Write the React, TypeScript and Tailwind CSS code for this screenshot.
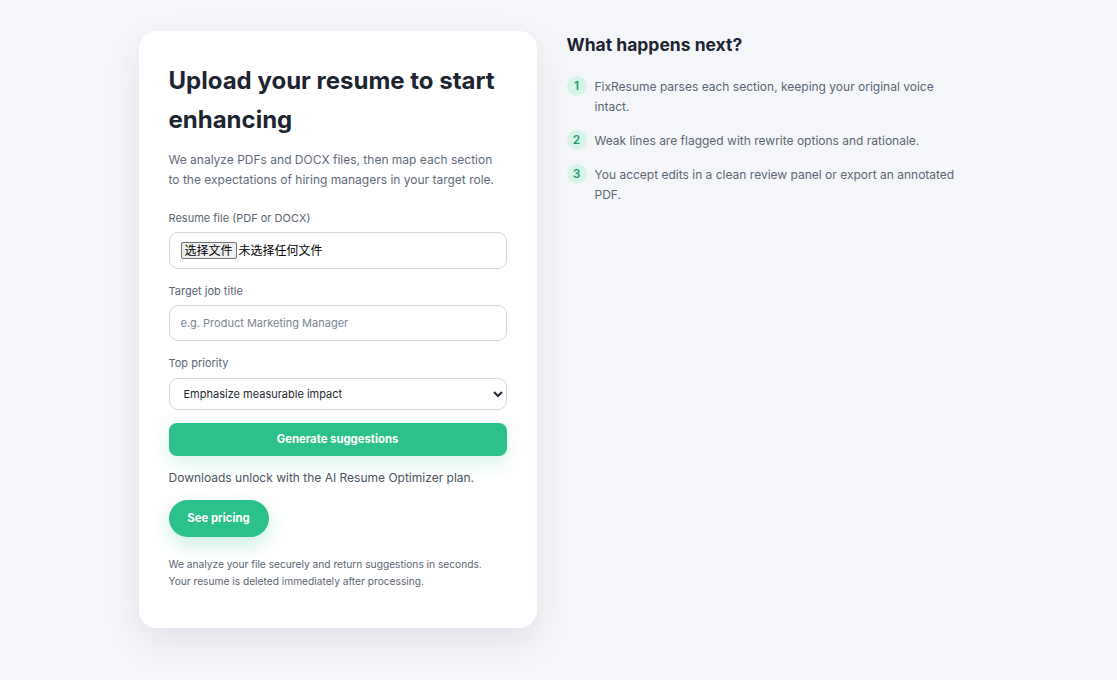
import { useState } from 'react'

const steps = [
    'FixResume parses each section, keeping your original voice intact.',
    'Weak lines are flagged with rewrite options and rationale.',
    'You accept edits in a clean review panel or export an annotated PDF.',
]

const App = () => {
    const [fileName, setFileName] = useState('')
    const [title, setTitle] = useState('')
    const [priority, setPriority] = useState('impact')

    return (
        <div className="min-h-screen bg-[#f5f6fa] font-['Inter','Noto_Sans_CJK_SC',sans-serif] text-[#1f2933]">
            <div className="mx-auto flex w-[840px] items-start gap-[30px] pt-[31px]">
                <div className="w-[398px] shrink-0 rounded-[18px] bg-white px-[30px] pt-[30px] pb-[38px] shadow-[0_14px_36px_rgba(30,41,59,0.09)]">
                    <h1 className="text-[24px] leading-[39px] font-bold text-[#1c2530]">
                        Upload your resume to start enhancing
                    </h1>
                    <p className="mt-[11px] text-[12px] leading-[20px] text-[#5f6b7a]">
                        We analyze PDFs and DOCX files, then map each section to the expectations of hiring managers in your target role.
                    </p>

                    <label className="mt-[20px] block text-[11px] leading-[16px] text-[#5b6573]">Resume file (PDF or DOCX)</label>
                    <label className="mt-[6px] flex h-[37px] cursor-pointer items-center rounded-[9px] border border-[#d4d8de] px-[11px] text-[12px]">
                        <input
                            type="file"
                            accept=".pdf,.docx"
                            className="hidden"
                            onChange={(e) => setFileName(e.target.files?.[0]?.name ?? '')}
                        />
                        <span className="rounded-[2px] border border-[#767676] bg-[#efefef] px-[3px] leading-[15px] text-black">选择文件</span>
                        <span className="ml-[2px] text-black">{fileName || '未选择任何文件'}</span>
                    </label>

                    <label className="mt-[14px] block text-[11px] leading-[16px] text-[#5b6573]">Target job title</label>
                    <input
                        value={title}
                        onChange={(e) => setTitle(e.target.value)}
                        placeholder="e.g. Product Marketing Manager"
                        className="mt-[6px] h-[36px] w-full rounded-[9px] border border-[#d4d8de] px-[11px] text-[11px] text-[#1f2933] placeholder:text-[#7b8592] focus:outline-none"
                    />

                    <label className="mt-[14px] block text-[11px] leading-[16px] text-[#5b6573]">Top priority</label>
                    <select
                        value={priority}
                        onChange={(e) => setPriority(e.target.value)}
                        className="mt-[7px] h-[32px] w-full appearance-auto rounded-[9px] border border-[#d4d8de] bg-white px-[10px] text-[11px] text-[#1f2933] focus:outline-none"
                    >
                        <option value="impact">Emphasize measurable impact</option>
                        <option value="leadership">Highlight leadership</option>
                        <option value="keywords">Match role keywords</option>
                    </select>

                    <button className="mt-[13px] h-[33px] w-full rounded-[8px] bg-[#2cc08a] text-[11.3px] font-bold text-white shadow-[0_8px_20px_rgba(44,192,138,0.18)]">
                        Generate suggestions
                    </button>

                    <p className="mt-[14px] text-[12px] leading-[16px] text-[#4a5461]">Downloads unlock with the AI Resume Optimizer plan.</p>

                    <button className="mt-[14px] h-[37px] w-[100px] rounded-full bg-[#2cc08a] text-[11.3px] font-bold text-white shadow-[0_8px_20px_rgba(44,192,138,0.25)]">
                        See pricing
                    </button>

                    <p className="mt-[19px] text-[10.2px] leading-[17px] text-[#5b6573]">
                        We analyze your file securely and return suggestions in seconds.
                        <br />
                        Your resume is deleted immediately after processing.
                    </p>
                </div>

                <div className="flex-1 pr-[14px]">
                    <h2 className="mt-[2px] text-[17.5px] leading-[24px] font-bold text-[#1c2530]">What happens next?</h2>
                    <ol className="mt-[20px] flex flex-col gap-[14px]">
                        {steps.map((step, i) => (
                            <li key={i} className="flex items-start gap-[8px]">
                                <span className="mt-[-1px] flex h-[20px] w-[20px] shrink-0 items-center justify-center rounded-full bg-[#d6f4e7] text-[12px] font-semibold text-[#1f9b6c]">
                                    {i + 1}
                                </span>
                                <span className="text-[12px] leading-[20px] text-[#5b6573]">{step}</span>
                            </li>
                        ))}
                    </ol>
                </div>
            </div>
        </div>
    )
}

export default App
